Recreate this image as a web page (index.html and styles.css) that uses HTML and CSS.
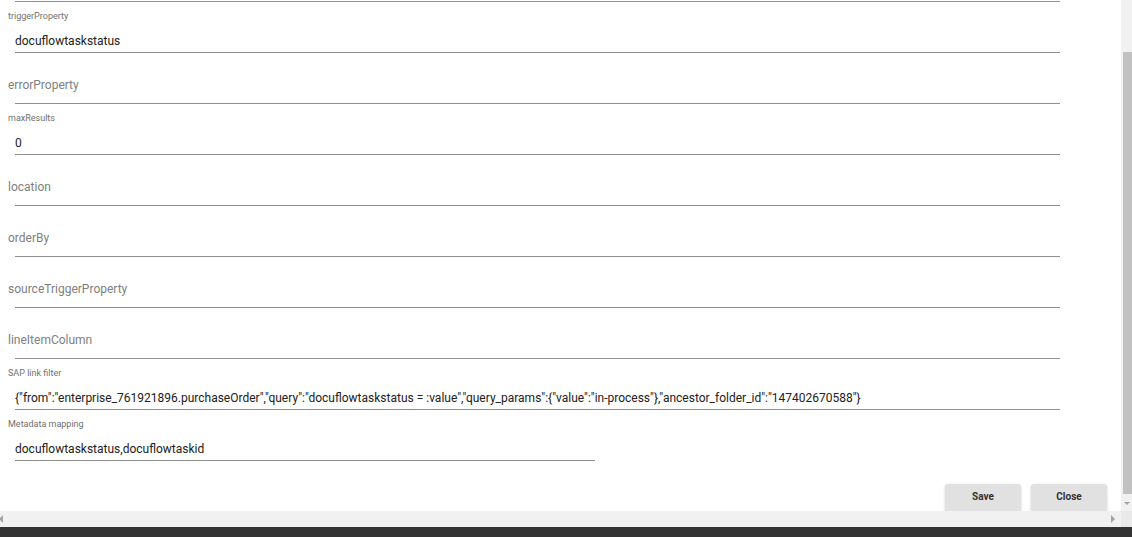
FILE: index.html
```html
<!DOCTYPE html>
<html lang="en">
<head>
<meta charset="utf-8">
<title>Trigger settings</title>
<link rel="stylesheet" href="styles.css">
</head>
<body>
<div class="app">
  <div class="viewport">
    <div class="content">
      <form class="form">
        <div class="field">
          <div class="input"></div>
        </div>
        <div class="field">
          <div class="label">triggerProperty</div>
          <div class="input"><span class="value">docuflowtaskstatus</span></div>
        </div>
        <div class="field empty">
          <div class="input"><span class="placeholder">errorProperty</span></div>
        </div>
        <div class="field">
          <div class="label">maxResults</div>
          <div class="input"><span class="value">0</span></div>
        </div>
        <div class="field empty">
          <div class="input"><span class="placeholder">location</span></div>
        </div>
        <div class="field empty">
          <div class="input"><span class="placeholder">orderBy</span></div>
        </div>
        <div class="field empty">
          <div class="input"><span class="placeholder">sourceTriggerProperty</span></div>
        </div>
        <div class="field empty">
          <div class="input"><span class="placeholder">lineItemColumn</span></div>
        </div>
        <div class="field">
          <div class="label">SAP link filter</div>
          <div class="input"><span class="value">{"from":"enterprise_761921896.purchaseOrder","query":"docuflowtaskstatus = :value","query_params":{"value":"in-process"},"ancestor_folder_id":"147402670588"}</span></div>
        </div>
        <div class="field short">
          <div class="label">Metadata mapping</div>
          <div class="input"><span class="value">docuflowtaskstatus,docuflowtaskid</span></div>
        </div>
        <div class="actions">
          <button type="button" class="btn">Save</button>
          <button type="button" class="btn">Close</button>
        </div>
      </form>
    </div>
    <div class="vscroll">
      <div class="vthumb"></div>
      <div class="arrow-down"></div>
    </div>
  </div>
  <div class="hscroll">
    <div class="htrack">
      <span class="arrow-left"></span>
      <span class="arrow-right"></span>
    </div>
    <div class="corner"></div>
  </div>
  <div class="statusbar"></div>
</div>
</body>
</html>
```

FILE: styles.css
```css
html, body {
  margin: 0;
  padding: 0;
  background: #ffffff;
}

body {
  font-family: Roboto, "Liberation Sans", Arial, sans-serif;
  color: #212121;
}

.app {
  display: flex;
  flex-direction: column;
  width: 1132px;
  height: 537px;
  overflow: hidden;
}

.viewport {
  display: flex;
  height: 511px;
  flex: none;
}

.content {
  flex: 1;
  overflow: hidden;
  background: #ffffff;
}

/* the form is scrolled so the first field is mostly out of view */
.form {
  margin-top: -49px;
  padding-left: 8px;
}

.field {
  display: flex;
  flex-direction: column;
  justify-content: flex-end;
  height: 51px;
  box-sizing: border-box;
}

.label {
  font-size: 9px;
  line-height: 12px;
  color: #6f6f6f;
  margin-bottom: 10px;
}

.input {
  margin-left: 7px;
  width: 1045px;
  border-bottom: 1px solid #8f8f8f;
  padding-bottom: 4px;
  height: 16px;
  display: flex;
  align-items: center;
  white-space: nowrap;
}

.field.empty .input {
  padding-bottom: 10px;
}

.field.short .input {
  width: 580px;
}

.value {
  font-size: 12px;
  line-height: 16px;
  color: #212121;
  padding-top: 1px;
}

.placeholder {
  font-size: 12px;
  line-height: 16px;
  color: #808080;
  margin-left: -7px;
}

.actions {
  display: flex;
  justify-content: flex-end;
  gap: 10px;
  margin-top: 23px;
  padding-right: 14px;
}

.btn {
  width: 76px;
  height: 28px;
  border: none;
  border-radius: 3px;
  background: #e1e1e1;
  color: #333333;
  font-family: Roboto, "Liberation Sans", Arial, sans-serif;
  font-size: 10px;
  font-weight: 700;
  box-shadow: 0 1px 3px rgba(0, 0, 0, 0.18);
  padding: 0 0 4px;
}

.vscroll {
  width: 11px;
  flex: none;
  background: #f1f1f1;
  display: flex;
  flex-direction: column;
  align-items: flex-end;
  padding-top: 52px;
  box-sizing: border-box;
}

.vthumb {
  width: 9px;
  height: 442px;
  background: #c1c1c1;
}

.arrow-down {
  margin: 8px 2px 0 0;
  width: 0;
  height: 0;
  border-left: 3px solid transparent;
  border-right: 3px solid transparent;
  border-top: 3px solid #a3a3a3;
}

.hscroll {
  display: flex;
  height: 16px;
  flex: none;
  background: #f1f1f1;
}

.htrack {
  flex: 1;
  display: flex;
  align-items: center;
  justify-content: space-between;
  padding-right: 6px;
}

.arrow-left {
  width: 0;
  height: 0;
  margin-left: -1px;
  border-top: 4px solid transparent;
  border-bottom: 4px solid transparent;
  border-right: 4px solid #a3a3a3;
}

.arrow-right {
  width: 0;
  height: 0;
  border-top: 4px solid transparent;
  border-bottom: 4px solid transparent;
  border-left: 4px solid #a3a3a3;
}

.corner {
  width: 11px;
  background: #e9e9e9;
}

.statusbar {
  height: 10px;
  flex: none;
  background: #333333;
}
```
